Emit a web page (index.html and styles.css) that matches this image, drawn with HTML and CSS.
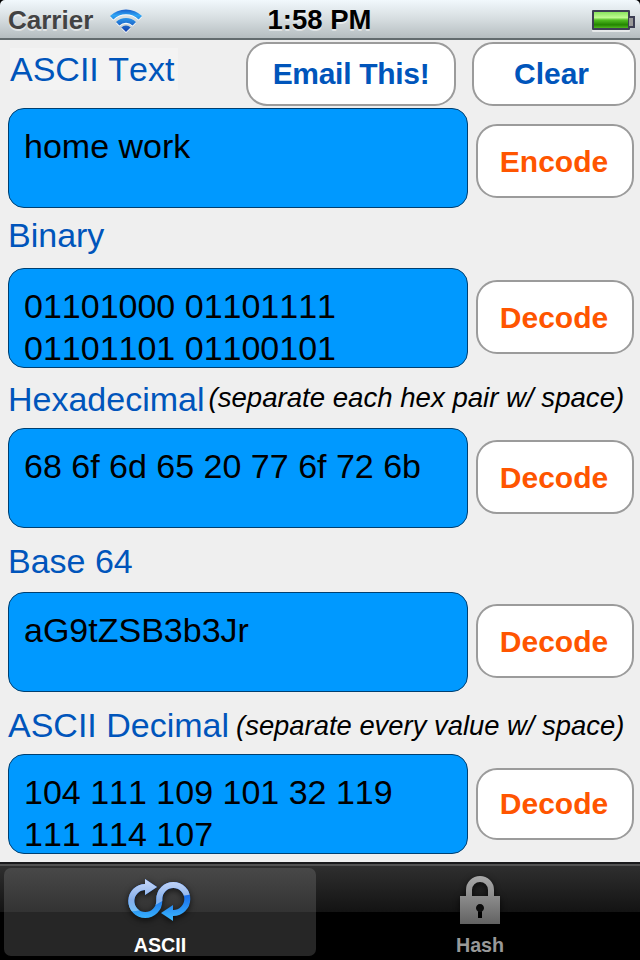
FILE: index.html
```html
<!DOCTYPE html>
<html>
<head>
    <meta charset="utf-8">
    <meta name="viewport" content="width=device-width, initial-scale=1.0">
    <title>ASCII</title>
    <link rel="stylesheet" href="styles.css">
</head>
<body>
    <div class="status-bar">
        <div class="status-left">
            <span class="carrier">Carrier</span>
            <svg class="wifi" width="34" height="28" viewBox="0 0 34 28">
                <defs>
                    <linearGradient id="wifi-blue" gradientUnits="userSpaceOnUse" x1="0" y1="1" x2="0" y2="26">
                        <stop offset="0" stop-color="#1450c4"/>
                        <stop offset=".3" stop-color="#2fa4f4"/>
                        <stop offset="1" stop-color="#1038a8"/>
                    </linearGradient>
                </defs>
                <g fill="url(#wifi-blue)">
                    <path d="M1 9A23 23 0 0 1 33 9L29.6 12.4A17.8 17.8 0 0 0 4.4 12.4Z"/>
                    <path d="M7 15A14.2 14.2 0 0 1 27 15L23.6 18.4A9.6 9.6 0 0 0 10.4 18.4Z"/>
                    <path d="M12.4 20.4A6.6 6.6 0 0 1 21.6 20.4L17 25Z"/>
                </g>
            </svg>
        </div>
        <span class="time">1:58 PM</span>
        <div class="battery"></div>
    </div>

    <div class="content">
        <div class="top-row">
            <label class="label label-text">ASCII Text</label>
            <button class="btn btn-blue btn-email">Email This!</button>
            <button class="btn btn-blue btn-clear">Clear</button>
        </div>
        <div class="row row-text">
            <div class="field">home work</div>
            <button class="btn">Encode</button>
        </div>

        <div class="heading heading-binary"><label class="label">Binary</label></div>
        <div class="row">
            <div class="field">01101000 01101111 01101101 01100101</div>
            <button class="btn">Decode</button>
        </div>

        <div class="heading heading-hex">
            <label class="label">Hexadecimal</label>
            <span class="hint">(separate each hex pair w/ space)</span>
        </div>
        <div class="row">
            <div class="field">68 6f 6d 65 20 77 6f 72 6b</div>
            <button class="btn">Decode</button>
        </div>

        <div class="heading heading-base"><label class="label">Base 64</label></div>
        <div class="row">
            <div class="field">aG9tZSB3b3Jr</div>
            <button class="btn">Decode</button>
        </div>

        <div class="heading heading-decimal">
            <label class="label">ASCII Decimal</label>
            <span class="hint">(separate every value w/ space)</span>
        </div>
        <div class="row row-decimal">
            <div class="field">104 111 109 101 32 119 111 114 107</div>
            <button class="btn">Decode</button>
        </div>
    </div>

    <div class="tab-bar">
        <div class="tab active">
            <svg class="tab-icon" width="68" height="52" viewBox="0 0 68 52">
                <defs>
                    <linearGradient id="deep" gradientUnits="userSpaceOnUse" x1="0" y1="16" x2="0" y2="46">
                        <stop offset="0" stop-color="#1463e8"/>
                        <stop offset="1" stop-color="#3dbcff"/>
                    </linearGradient>
                    <linearGradient id="shine" gradientUnits="userSpaceOnUse" x1="0" y1="3" x2="0" y2="38">
                        <stop offset="0" stop-color="#c9d8f8"/>
                        <stop offset=".6" stop-color="#86afea"/>
                        <stop offset="1" stop-color="#72c4fb"/>
                    </linearGradient>
                    <clipPath id="gloss"><path d="M0 0H68V18Q52 20 38 24Q22 35 0 36Z"/></clipPath>
                    <g id="loop">
                        <path fill="none" stroke-width="6" d="M20 11H19.5A14 14 0 1 0 33.3 25V23A14 14 0 1 1 47.3 37H46"/>
                        <path stroke="none" d="M19 3L31 11L19 19ZM47 29L35 37L47 45Z"/>
                    </g>
                </defs>
                <use href="#loop" stroke="url(#deep)" fill="url(#deep)"/>
                <use href="#loop" stroke="url(#shine)" fill="url(#shine)" clip-path="url(#gloss)"/>
            </svg>
            <span>ASCII</span>
        </div>
        <div class="tab">
            <svg class="tab-icon" width="68" height="52" viewBox="0 0 68 52">
                <defs>
                    <linearGradient id="steel" gradientUnits="userSpaceOnUse" x1="0" y1="0" x2="0" y2="48">
                        <stop offset="0" stop-color="#aaa"/>
                        <stop offset="1" stop-color="#626262"/>
                    </linearGradient>
                </defs>
                <path fill="none" stroke="url(#steel)" stroke-width="6" d="M23 21V14A11 11 0 0 1 45 14V21"/>
                <path fill="url(#steel)" fill-rule="evenodd" d="M14 20H54V48H14ZM32 35.5V42H36V35.5A4 4 0 1 0 32 35.5Z"/>
            </svg>
            <span>Hash</span>
        </div>
    </div>
</body>
</html>
```
FILE: styles.css
```css
* {
    box-sizing: border-box;
}

body {
    margin: 0;
    width: 640px;
    height: 960px;
    display: flex;
    flex-direction: column;
    background: #000;
    font-family: "Liberation Sans", Arial, Helvetica, sans-serif;
    font-kerning: none;
    overflow: hidden;
}

.status-bar {
    height: 40px;
    display: grid;
    grid-template-columns: 1fr auto 1fr;
    align-items: center;
    padding: 0 6px 0 8px;
    background: linear-gradient(#f1f8fc, #d6dde0 50%, #b5bdc0);
    border-bottom: 2px solid #626b6e;
    border-radius: 5px 5px 0 0;
    font-weight: bold;
    text-shadow: 0 2px 0 rgba(255,255,255,0.5);
}

.status-left {
    display: flex;
    align-items: center;
    gap: 16px;
}

.carrier {
    font-size: 26px;
    line-height: 38px;
    padding-top: 1px;
    color: #434343;
}

.wifi {
    margin-top: 2px;
    filter: drop-shadow(0 1px 0 #fff);
}

.time {
    padding-right: 3px;
    font-size: 27.5px;
    line-height: 38px;
    padding-top: 1px;
    color: #000;
}

.battery {
    justify-self: end;
    position: relative;
    width: 38px;
    height: 20px;
    margin-right: 4px;
    border: 2px solid #3d3f54;
    border-radius: 1px;
    background: linear-gradient(#8ae45f, #c0fa91 35%, #51bd22 50%, #238500 80%, #4fb620);
    box-shadow: 0 2px 0 rgba(255,255,255,0.6);
}

.battery::after {
    content: '';
    position: absolute;
    left: 35px;
    top: 4px;
    width: 4px;
    height: 8px;
    border: 2px solid #3d3f54;
    border-left: 0;
    background: #999;
}

.content {
    height: 822px;
    background: #efefef;
}

.label {
    color: #0055bb;
    font-size: 34px;
    line-height: 42px;
    white-space: nowrap;
}

.label-text {
    width: 168px;
    height: 42px;
    margin: 8px 68px 0 10px;
    background: #f3f3f3;
}

.top-row {
    display: flex;
    height: 68px;
}

.btn {
    width: 158px;
    height: 74px;
    margin-top: 12px;
    padding: 2px 2px 0 0;
    border: 2px solid #9b9b9b;
    border-radius: 21px;
    background: #fff;
    color: #ff5500;
    font-family: inherit;
    font-size: 30px;
    font-weight: bold;
}

.btn-blue {
    height: 64px;
    margin-top: 2px;
    padding-top: 0;
    color: #0055bb;
}

.btn-email {
    width: 210px;
    padding-right: 0;
    letter-spacing: -0.3px;
}

.btn-clear {
    width: 164px;
    margin-left: 16px;
    padding-right: 5px;
}

.row {
    display: flex;
    gap: 8px;
    padding-left: 8px;
}

.row-text .btn {
    margin-top: 16px;
}

.row-decimal .btn {
    height: 72px;
    margin-top: 14px;
    padding-top: 0;
}

.field {
    width: 460px;
    height: 100px;
    padding: 16px 30px 0 15px;
    border: 1px solid #003f70;
    border-radius: 16px;
    background: #0099ff;
    color: #000;
    font-size: 34px;
    line-height: 42px;
    overflow: hidden;
}

.heading {
    display: flex;
    height: 60px;
    padding: 6px 0 0 8px;
}

.heading-hex {
    padding-top: 10px;
}

.heading-base {
    height: 64px;
    padding-top: 12px;
}

.heading-decimal {
    height: 62px;
    padding-top: 12px;
}

.hint {
    margin-left: 4px;
    font-size: 27.6px;
    font-style: italic;
    line-height: 39px;
    white-space: nowrap;
}

.heading-decimal .hint {
    margin-left: 7px;
    font-size: 27.4px;
    line-height: 43px;
}

.tab-bar {
    height: 98px;
    display: flex;
    gap: 8px;
    padding: 2px 4px 4px;
    border-top: 2px solid #1a1a1c;
    background:
        linear-gradient(#525252, #525252) 0 0 / 100% 2px no-repeat,
        linear-gradient(#303030, #131313) 0 0 / 100% 48px no-repeat,
        #000;
}

.tab {
    width: 312px;
    height: 88px;
    margin-top: 2px;
    display: flex;
    flex-direction: column;
    align-items: center;
    padding-top: 8px;
    border-radius: 7px;
    color: #999;
    font-size: 19.7px;
    font-weight: bold;
    line-height: 24px;
}

.tab.active {
    background: linear-gradient(#484848, #333 44px, #262626 44px, #262626);
    color: #fff;
}

.tab-icon {
    flex-shrink: 0;
    margin-bottom: 5px;
    filter: drop-shadow(0 2px 3px rgba(0,0,0,0.7));
}
```
